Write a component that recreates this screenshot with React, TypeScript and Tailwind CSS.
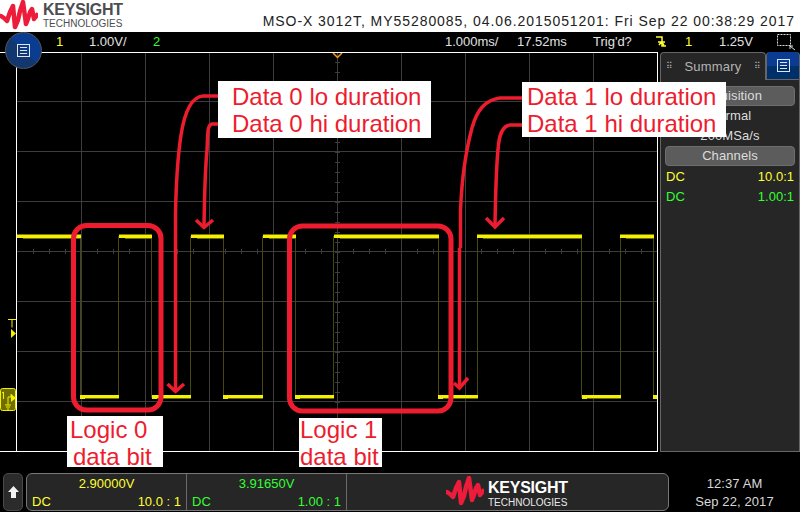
import React from 'react';

const RED = '#ed1c2e';

const highs: [number, number][] = [[17, 81], [119, 152], [191, 224], [263, 296], [334, 439], [477, 582], [620, 654]];
const lows: [number, number][] = [[80, 119], [152, 191], [223, 263], [295, 334], [438, 478], [582, 621], [653, 657]];
const verticals = [81, 119, 152, 191, 224, 263, 296, 334, 439, 478, 582, 621, 654];

const gridX = [81, 145, 209, 273, 337, 401, 465, 529, 593];
const gridY = [101, 151, 201, 251, 301, 351, 401];

const range = (from: number, to: number, step: number) => {
  const out: number[] = [];
  for (let v = from; v <= to; v += step) out.push(v);
  return out;
};

const Wave: React.FC<{ className?: string }> = ({ className }) => (
  <svg viewBox="0 0 38 32" className={className}>
    <polyline
      points="1,16 4,18 7,21 10,12 13,6 15,27 18,20 20,11 23,2 26,24 28,19 30,12 32,9 34,19 37,15"
      fill="none"
      stroke="currentColor"
      strokeWidth="4.500"
      strokeLinejoin="round"
      strokeLinecap="round"
    />
  </svg>
);

const MenuIcon: React.FC<{ className?: string }> = ({ className }) => (
  <svg viewBox="0 0 13 13" className={className} fill="none" stroke="#dfe6f2" strokeWidth="1">
    <rect x="0.5" y="0.5" width="12" height="12" />
    <path d="M3 3.5h7M3 6.5h7M3 9.5h7" />
  </svg>
);

const Scope: React.FC = () => (
  <svg width="640" height="398" viewBox="17 53 640 398" className="block">
    <g stroke="#3c3c3c" strokeWidth="1" shapeRendering="crispEdges">
      {gridX.map((x) => <line key={x} x1={x + 0.5} y1="53" x2={x + 0.5} y2="451" />)}
      {gridY.map((y) => <line key={y} x1="17" y1={y + 0.5} x2="657" y2={y + 0.5} />)}
      {range(33, 657, 16).map((x) => <line key={x} x1={x + 0.5} y1="249" x2={x + 0.5} y2="254" />)}
      {range(62, 442, 10).map((y) => <line key={y} x1="335" y1={y + 0.5} x2="340" y2={y + 0.5} />)}
    </g>
    <path d="M333 53l4.500 4.500 4.500-4.500" fill="none" stroke="#f59a1b" strokeWidth="1.500" />
    <g shapeRendering="crispEdges">
      {verticals.map((x) => <rect key={x} x={x - 1} y="236" width="1" height="162" fill="#47470f" />)}
      {highs.map(([a, b]) => (
        <g key={a}>
          <rect x={a} y="234" width={b - a} height="1" fill="#77770a" />
          <rect x={a} y="235" width={b - a} height="3" fill="#f5f000" />
          <rect x={a + 6} y="238" width={b - a - 6} height="1" fill="#6a6a08" />
        </g>
      ))}
      {lows.map(([a, b]) => (
        <g key={a}>
          <rect x={a} y="395" width={b - a} height="3" fill="#f5f000" />
          <rect x={a} y="398" width={Math.min(5, b - a)} height="1" fill="#f5f000" />
          <rect x={a + 5} y="398" width={Math.max(b - a - 5, 0)} height="1" fill="#6a6a08" />
        </g>
      ))}
    </g>
  </svg>
);

const Annotations: React.FC = () => (
  <svg width="800" height="512" viewBox="0 0 800 512" className="absolute left-0 top-0 pointer-events-none">
    <g fill="none" stroke={RED}>
      <rect x="73.500" y="225.500" width="87.500" height="184.500" rx="13" strokeWidth="5" />
      <rect x="289.500" y="226" width="161.500" height="185" rx="13" strokeWidth="5" />
      <g strokeWidth="3.500">
        <path d="M227 96H203C190 97 184 116 181 135C178 155 176 185 175.500 215V390" />
        <path d="M167.500 384L175.500 391.500L184 384" />
        <path d="M228 124H212C207 125 208 133 207 150C205 170 204.500 195 204 226" />
        <path d="M196 220L204 227.500L213 220" />
        <path d="M523 98H500C485 100 477 110 472 128C466 150 462 175 460.500 210V248M459.500 248V387" />
        <path d="M454 383L459.500 388L468 378" />
        <path d="M523 125H510C502 126 499 135 498 150C496 170 495.500 195 495 226" />
        <path d="M486 218L495 227L504 218" />
      </g>
    </g>
  </svg>
);

const Callout: React.FC<{ className: string; lines: string[] }> = ({ className, lines }) => (
  <div className={`absolute bg-white text-[#ed1c2e] font-['Liberation_Sans',sans-serif] text-[24px] leading-[27px] whitespace-pre ${className}`}>
    {lines.map((l) => <div key={l}>{l}</div>)}
  </div>
);

const PanelButton: React.FC<{ label: string }> = ({ label }) => (
  <div className="mx-[4px] h-[20px] rounded-[4px] bg-[#5c5c5c] border border-[#6e6e6e] flex items-center justify-center text-[#dcdcdc] text-[13px] tracking-[0.1px]">
    {label}
  </div>
);

const ChannelBox: React.FC<{ volts: string; ratio: string; color: string }> = ({ volts, ratio, color }) => (
  <div className={`w-[160px] shrink-0 border-r border-[#6a6a6a] px-[5px] pt-px flex flex-col text-[13px] leading-[18px] ${color}`}>
    <div className="text-center">{volts}</div>
    <div className="flex justify-between">
      <span>DC</span>
      <span>{ratio}</span>
    </div>
  </div>
);

export default function App() {
  return (
    <div className="relative w-[800px] h-[512px] overflow-hidden bg-black font-['Liberation_Sans',sans-serif]">
      {/* header */}
      <div className="h-8 bg-white flex">
        <Wave className="w-[38px] h-[32px] text-[#ed1c3a] shrink-0" />
        <div className="ml-[5px] text-[#4d4d4f] shrink-0">
          <div className="text-[16px] font-bold leading-[17px] mt-[1px] -tracking-[0.25px]">KEYSIGHT</div>
          <div className="text-[10px] leading-[10px] mt-[1px]">TECHNOLOGIES</div>
        </div>
        <div className="ml-auto mr-[5px] self-end text-[14px] leading-[20px] mb-px text-[#222] tracking-[0.94px] whitespace-pre">
          MSO-X 3012T, MY55280085, 04.06.2015051201: Fri Sep 22 00:38:29 2017
        </div>
      </div>

      {/* status line */}
      <div className="h-5 flex items-center text-[13px] text-[#e2e2e2] whitespace-pre">
        <span className="ml-[56px] w-[33px] text-[#ffff33]">1</span>
        <span className="w-[64px]">1.00V/</span>
        <span className="w-[292px] text-[#33ff33]">2</span>
        <span className="w-[72px]">1.000ms/</span>
        <span className="w-[76px]">17.52ms</span>
        <span className="w-[63px]">Trig'd?</span>
        <svg width="10" height="12" viewBox="0 0 10 12" fill="none" stroke="#ffff33" strokeWidth="1.500" className="shrink-0">
          <path d="M0 1h6v9h4M2 6h7M5.500 6L3 9M5.500 6L8 9" />
        </svg>
        <span className="ml-[19px] w-[34px] text-[#ffff33]">1</span>
        <span className="w-[58px]">1.25V</span>
        <svg width="19" height="17" viewBox="0 0 19 17" fill="none" className="shrink-0">
          <rect x="0.500" y="0.500" width="13" height="11" stroke="#ddd" strokeDasharray="2 1" />
          <path d="M13 12l5 4M13 12h3M13 12v3" stroke="#ddd" />
        </svg>
      </div>

      {/* display + side panel */}
      <div className="h-[400px] flex">
        <div className="w-[658px] shrink-0 border-y border-white pl-4">
          <div className="w-[642px] h-full border-x border-white">
            <Scope />
          </div>
        </div>
        <div className="ml-[2px] w-[140px] flex flex-col">
          <div className="h-[28px] flex">
            <div className="w-[106px] rounded-t-[4px] border-x border-t border-[#666] bg-[#262626] flex items-center justify-between px-[5px] text-[#b4b4b4] text-[13px] tracking-[0.2px]">
              <span className="text-[9px] leading-[9px] w-[6px] text-[#aaa]">⠿</span>
              <span>Summary</span>
              <span className="text-[9px] leading-[9px] w-[6px] text-[#aaa]">⠿</span>
            </div>
            <div className="w-[34px] rounded-t-[4px] border-x border-b border-[#666] bg-[linear-gradient(#0a3c94_50%,#00306a_50%)] flex items-center justify-center">
              <MenuIcon className="w-[13px] h-[13px]" />
            </div>
          </div>
          <div className="flex-1 bg-[#262626] border-x border-b border-[#666] flex flex-col text-[13px] pt-[6px]">
            <PanelButton label="Acquisition" />
            <div className="h-[20px] leading-[20px] text-center text-[#dcdcdc] tracking-[0.1px]">Normal</div>
            <div className="h-[20px] leading-[20px] text-center text-[#dcdcdc] tracking-[0.1px]">200MSa/s</div>
            <PanelButton label="Channels" />
            <div className="mt-[1px] h-[20px] px-[5px] flex items-center justify-between text-[#ffff33]">
              <span>DC</span>
              <span>10.0:1</span>
            </div>
            <div className="h-[20px] px-[5px] flex items-center justify-between text-[#33ff33]">
              <span>DC</span>
              <span>1.00:1</span>
            </div>
          </div>
        </div>
      </div>

      {/* bottom bar */}
      <div className="h-[60px] pt-[21px] flex">
        <div className="ml-[3px] w-[20px] h-[38px] rounded-[5px] bg-[#2b2b2b] border border-[#4a4a4a] flex items-center justify-center">
          <svg width="11" height="12" viewBox="0 0 11 12" fill="#f2f2f2">
            <path d="M5.500 0L11 6H8v6H3V6H0z" />
          </svg>
        </div>
        <div className="ml-[3px] w-[643px] h-[38px] rounded-[6px] bg-[#262626] border border-[#777] flex">
          <ChannelBox volts="2.90000V" ratio="10.0 : 1" color="text-[#ffff33]" />
          <ChannelBox volts="3.91650V" ratio="1.00 : 1" color="text-[#33ff33]" />
          <div className="flex-1 pl-[99px] flex">
            <Wave className="w-[38px] h-[32px] mt-[2px] text-[#ed1c3a] shrink-0" />
            <div className="ml-[4px] text-white shrink-0">
              <div className="text-[16px] font-bold leading-[17px] mt-[5px] -tracking-[0.25px]">KEYSIGHT</div>
              <div className="text-[10px] leading-[10px] mt-[2px] text-[#e8e8e8]">TECHNOLOGIES</div>
            </div>
          </div>
        </div>
        <div className="flex-1 text-center text-[#d8d8d8] text-[13px] leading-[18px] tracking-[0.1px] mt-[2px]">
          <div>12:37 AM</div>
          <div>Sep 22, 2017</div>
        </div>
      </div>

      {/* left gutter markers */}
      <svg width="16" height="100" viewBox="0 0 16 100" className="absolute left-0 top-[315px]">
        <path d="M8 4.500h8M12 4.500v8" stroke="#f5f000" fill="none" />
        <path d="M11 14l5 4.500-5 4.500z" fill="#f5f000" />
        <rect x="0.500" y="73.500" width="15" height="22" rx="2" fill="#6d6d00" stroke="#f5f000" />
        <path d="M2 78l1.500-1v7M5 90h6M6 92h4M7 94h2M8 90v-8h3v-3" stroke="#f5f000" fill="none" />
        <path d="M11 79l5 4-5 4z" fill="#f5f000" />
      </svg>

      {/* blue softkey */}
      <div className="absolute left-[5px] top-[32px] w-[37px] h-[37px] rounded-full border border-[#555] bg-[linear-gradient(45deg,#12376f_50%,#0a3d91_50%)] flex items-center justify-center">
        <MenuIcon className="w-[13px] h-[13px]" />
      </div>

      <Annotations />

      <Callout className="left-[218px] top-[81px] w-[213px] h-[57px] pl-[14px] pt-[2px]" lines={['Data 0 lo duration', 'Data 0 hi duration']} />
      <Callout className="left-[522px] top-[82px] w-[204px] h-[55px] pl-[5px] pt-px" lines={['Data 1 lo duration', 'Data 1 hi duration']} />
      <Callout className="left-[67px] top-[416px] w-[96px] h-[51px] pl-[3px] [&>div:last-child]:pl-[3px]" lines={['Logic 0', 'data bit']} />
      <Callout className="left-[299px] top-[418px] w-[83px] h-[49px] pl-px [&>div]:-translate-y-[2px]" lines={['Logic 1', 'data bit']} />
    </div>
  );
}
